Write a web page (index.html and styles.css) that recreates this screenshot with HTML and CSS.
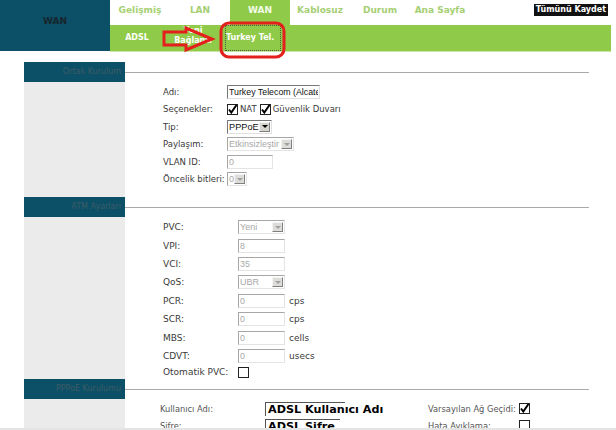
FILE: index.html
```html
<!DOCTYPE html>
<html lang="tr">
<head>
    <meta charset="UTF-8">
    <meta name="viewport" content="width=device-width, initial-scale=1.0">
    <title>WAN</title>
    <link rel="stylesheet" href="styles.css">
</head>
<body>
    <div class="header">
        <div class="logo">WAN</div>
        <div class="nav">
            <div class="tabs">
                <span class="tab">Gelişmiş</span>
                <span class="tab">LAN</span>
                <span class="tab active">WAN</span>
                <span class="tab">Kablosuz</span>
                <span class="tab">Durum</span>
                <span class="tab">Ana Sayfa</span>
                <span class="save">Tümünü Kaydet</span>
            </div>
            <div class="subtabs">
                <span class="subtab adsl">ADSL</span>
                <span class="subtab yeni">Yeni<br>Bağlantı</span>
                <span class="subtab current">Turkey Tel.</span>
            </div>
        </div>
    </div>

    <div class="page">
        <!-- Ortak kurulum -->
        <div class="sec-head">
            <div class="sec-title">Ortak Kurulum</div>
            <div class="sec-line"></div>
        </div>
        <div class="sec-body">
            <div class="side"></div>
            <div class="fields s1">
                <div class="row"><span class="lbl">Adı:</span><input class="inp w93" value="Turkey Telecom (Alcate"></div>
                <div class="row">
                    <span class="lbl">Seçenekler:</span>
                    <span class="cb checked"><svg width="11" height="11" viewBox="0 0 11 11"><path d="M2 5.5 L4.3 8.5 L9.5 1" fill="none" stroke="#000" stroke-width="2"/></svg></span>
                    <span class="opt">NAT</span>
                    <span class="cb checked"><svg width="11" height="11" viewBox="0 0 11 11"><path d="M2 5.5 L4.3 8.5 L9.5 1" fill="none" stroke="#000" stroke-width="2"/></svg></span>
                    <span class="opt">Güvenlik Duvarı</span>
                </div>
                <div class="row"><span class="lbl">Tip:</span><span class="sel w44 big"><span class="sel-text">PPPoE</span><span class="sel-btn"></span></span></div>
                <div class="row"><span class="lbl">Paylaşım:</span><span class="sel w67 dis"><span class="sel-text">Etkinsizleştir</span><span class="sel-btn"></span></span></div>
                <div class="row"><span class="lbl">VLAN ID:</span><input class="inp w46 dis" value="0"></div>
                <div class="row"><span class="lbl">Öncelik bitleri:</span><span class="sel w20 dis"><span class="sel-text">0</span><span class="sel-btn"></span></span></div>
            </div>
        </div>

        <!-- ATM ayarları -->
        <div class="sec-head">
            <div class="sec-title">ATM Ayarları</div>
            <div class="sec-line"></div>
        </div>
        <div class="sec-body">
            <div class="side"></div>
            <div class="fields s2">
                <div class="row"><span class="lbl">PVC:</span><span class="sel w47 dis"><span class="sel-text">Yeni</span><span class="sel-btn"></span></span></div>
                <div class="row"><span class="lbl">VPI:</span><input class="inp w47 dis" value="8"></div>
                <div class="row"><span class="lbl">VCI:</span><input class="inp w47 dis" value="35"></div>
                <div class="row"><span class="lbl">QoS:</span><span class="sel w47 dis"><span class="sel-text">UBR</span><span class="sel-btn"></span></span></div>
                <div class="row"><span class="lbl">PCR:</span><input class="inp w47 dis" value="0"><span class="unit">cps</span></div>
                <div class="row"><span class="lbl">SCR:</span><input class="inp w47 dis" value="0"><span class="unit">cps</span></div>
                <div class="row"><span class="lbl">MBS:</span><input class="inp w47 dis" value="0"><span class="unit">cells</span></div>
                <div class="row"><span class="lbl">CDVT:</span><input class="inp w47 dis" value="0"><span class="unit">usecs</span></div>
                <div class="row short"><span class="lbl">Otomatik PVC:</span><span class="cb"></span></div>
            </div>
        </div>

        <!-- PPPoE kurulumu -->
        <div class="sec-head">
            <div class="sec-title">PPPoE Kurulumu</div>
            <div class="sec-line"></div>
        </div>
        <div class="sec-body">
            <div class="side"></div>
            <div class="fields s3">
                <span class="lbl3">Kullanıcı Adı:</span>
                <span class="note w80">ADSL Kullanıcı Adı</span>
                <span class="lbl3">Varsayılan Ağ Geçidi:</span>
                <span class="cb checked"><svg width="11" height="11" viewBox="0 0 11 11"><path d="M2 5.5 L4.3 8.5 L9.5 1" fill="none" stroke="#000" stroke-width="2"/></svg></span>
                <span class="lbl3">Sifre:</span>
                <span class="note w75">ADSL Şifre</span>
                <span class="lbl3">Hata Ayıklama:</span>
                <span class="cb"></span>
            </div>
        </div>
    </div>
    <div class="bottom-edge"></div>

    <svg class="marks" width="616" height="62" viewBox="0 0 616 62">
        <polygon points="164,32 186,32 186,28 212,39 186,50 186,45 164,45" fill="none" stroke="#e3201b" stroke-width="3" stroke-linejoin="miter"/>
        <rect x="221" y="23" width="63" height="34" rx="8" fill="none" stroke="#e3201b" stroke-width="3"/>
    </svg>
</body>
</html>
```

FILE: styles.css
```css
body {
    margin: 0;
    font-family: "DejaVu Sans", sans-serif;
    font-size: 9px;
    color: #3a3a3a;
    background: #fff;
    position: relative;
    height: 430px;
    overflow: hidden;
}
.header {
    display: flex;
}
.logo {
    width: 110px;
    height: 51px;
    background: #0c5067;
    color: #17262d;
    font-weight: bold;
    font-size: 9px;
    text-align: center;
    line-height: 43px;
}
.nav {
    width: 501px;
    display: flex;
    flex-direction: column;
}
.tabs {
    display: flex;
    height: 25px;
}
.tab {
    width: 60px;
    text-align: center;
    color: #a6cf74;
    font-weight: bold;
    font-size: 9px;
    line-height: 21px;
}
.tab.active {
    background: #8fcb48;
    color: #f4fbe9;
}
.save {
    margin-left: auto;
    margin-top: 4px;
    margin-right: 3px;
    align-self: flex-start;
    background: #111;
    color: #fff;
    font-weight: bold;
    font-size: 8px;
    line-height: 12px;
    padding: 0 2px;
}
.subtabs {
    display: flex;
    align-items: center;
    height: 26px;
    background: #8fcb48;
    border-bottom: 1px solid #cbe7a6;
}
.subtab {
    color: #fff;
    font-weight: bold;
    font-size: 8px;
    line-height: 10px;
    text-align: center;
}
.adsl {
    width: 54px;
}
.yeni {
    width: 58px;
    margin-top: -4px;
}
.current {
    margin-left: 2px;
    padding: 9px 8px 9px 2px;
    outline: 1px dotted #4a5a3a;
    outline-offset: -2px;
}

/* sections */
.page {
    margin: 10px 0 0 24px;
    width: 565px;
}
.sec-head {
    display: flex;
    align-items: center;
    height: 20px;
}
.sec-title {
    width: 101px;
    height: 20px;
    box-sizing: border-box;
    padding-right: 4px;
    background: #0c5067;
    color: #3d5c66;
    font-size: 8px;
    line-height: 20px;
    text-align: right;
}
.sec-line {
    flex: 1;
    border-top: 1px solid #aaa;
}
.sec-body {
    display: flex;
}
.side {
    width: 101px;
    background: #ebebeb;
}
.fields {
    flex: 1;
    padding-left: 38px;
}
.s1 {
    padding-top: 1px;
    padding-bottom: 9px;
    font-size: 8.5px;
}
.s2 {
    padding-top: 1px;
}
.row {
    display: flex;
    align-items: center;
    height: 17.5px;
    white-space: nowrap;
}
.s2 .row {
    height: 18.4px;
}
.s2 .row.short {
    height: 14px;
}
.lbl {
    width: 64px;
    flex-shrink: 0;
}
.s2 .lbl {
    width: 75px;
}
.opt {
    margin: 0 3px 0 2px;
}
.unit {
    margin-left: 4px;
}

/* form controls, old windows look */
.inp {
    height: 14px;
    box-sizing: border-box;
    margin: 0;
    padding: 0 1px;
    border: 1px solid;
    border-color: #777 #e0e0e0 #e0e0e0 #777;
    background: #fff;
    font-family: "Liberation Sans", Arial, sans-serif;
    font-size: 8.8px;
    color: #111;
}
.inp.dis {
    color: #a8a8a8;
    border-color: #a6a6a6 #e4e4e4 #e4e4e4 #a6a6a6;
}
.w93 { width: 93px; }
.w80 { width: 80px; }
.w75 { width: 75px; }
.w67 { width: 67px; }
.w47 { width: 47px; }
.w46 { width: 46px; }
.w44 { width: 45px; }
.w20 { width: 20px; }
.sel {
    display: inline-flex;
    height: 14px;
    box-sizing: border-box;
    border: 1px solid;
    border-color: #777 #e0e0e0 #e0e0e0 #777;
    background: #fff;
}
.sel-text {
    flex: 1;
    padding-left: 1px;
    font-family: "Liberation Sans", Arial, sans-serif;
    font-size: 9px;
    line-height: 12px;
    color: #111;
    white-space: nowrap;
    overflow: hidden;
}
.sel.big .sel-text {
    font-size: 9.2px;
}
.sel-btn {
    width: 11px;
    flex-shrink: 0;
    margin: 1px 1px 1px 0;
    background: #d6d4ce;
    border: 1px solid;
    border-color: #f4f4f4 #808080 #808080 #f4f4f4;
    box-sizing: border-box;
    display: flex;
    align-items: center;
    justify-content: center;
}
.sel-btn::after {
    content: "";
    border-left: 3px solid transparent;
    border-right: 3px solid transparent;
    border-top: 3px solid #000;
}
.sel.dis {
    border-color: #a6a6a6 #e4e4e4 #e4e4e4 #a6a6a6;
}
.sel.dis .sel-text {
    color: #a8a8a8;
}
.sel.dis .sel-btn {
    background: #dedcd8;
}
.sel.dis .sel-btn::after {
    border-top-color: #a0a0a0;
}
.cb {
    width: 11px;
    height: 11px;
    box-sizing: border-box;
    border: 1px solid #222;
    background: #fff;
    display: inline-flex;
    flex-shrink: 0;
}
.cb svg {
    margin: -1px;
}

/* pppoe block */
.s3 {
    padding-left: 35px;
    padding-top: 1px;
    display: grid;
    grid-template-columns: 105px 163px 91px auto;
    grid-auto-rows: 17px;
    align-items: center;
    white-space: nowrap;
}
.lbl3 {
    color: #555;
    font-size: 8.3px;
}
.note {
    height: 14px;
    box-sizing: border-box;
    border-top: 1px solid #555;
    border-left: 1px solid #555;
    padding-left: 2px;
    font-size: 11.2px;
    font-weight: bold;
    line-height: 14px;
    color: #000;
    overflow: visible;
}
.bottom-edge {
    position: absolute;
    left: 0;
    right: 0;
    bottom: 0;
    height: 2px;
    background: #e4e4e4;
}

.marks {
    position: absolute;
    top: 0;
    left: 0;
    pointer-events: none;
}
```
